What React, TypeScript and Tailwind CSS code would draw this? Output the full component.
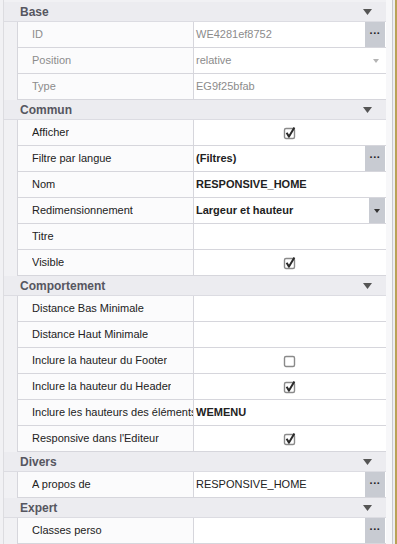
import React from 'react';

type Row = {
  label: string;
  value?: string;
  bold?: boolean;
  disabled?: boolean;
  check?: boolean;
  ellipsis?: boolean;
  combo?: boolean;
  fadedCombo?: boolean;
};

type Section = { title: string; rows: Row[] };

const sections: Section[] = [
  {
    title: 'Base',
    rows: [
      { label: 'ID', value: 'WE4281ef8752', disabled: true, ellipsis: true },
      { label: 'Position', value: 'relative', disabled: true, fadedCombo: true },
      { label: 'Type', value: 'EG9f25bfab', disabled: true },
    ],
  },
  {
    title: 'Commun',
    rows: [
      { label: 'Afficher', check: true },
      { label: 'Filtre par langue', value: '(Filtres)', bold: true, ellipsis: true },
      { label: 'Nom', value: 'RESPONSIVE_HOME', bold: true },
      { label: 'Redimensionnement', value: 'Largeur et hauteur', bold: true, combo: true },
      { label: 'Titre' },
      { label: 'Visible', check: true },
    ],
  },
  {
    title: 'Comportement',
    rows: [
      { label: 'Distance Bas Minimale' },
      { label: 'Distance Haut Minimale' },
      { label: 'Inclure la hauteur du Footer', check: false },
      { label: 'Inclure la hauteur du Header', check: true },
      { label: 'Inclure les hauteurs des éléments', value: 'WEMENU', bold: true },
      { label: "Responsive dans l'Editeur", check: true },
    ],
  },
  {
    title: 'Divers',
    rows: [{ label: 'A propos de', value: 'RESPONSIVE_HOME', ellipsis: true }],
  },
  {
    title: 'Expert',
    rows: [{ label: 'Classes perso', ellipsis: true }],
  },
];

function CheckBox({ checked }: { checked: boolean }) {
  return (
    <svg width="14" height="14" viewBox="0 0 14 14">
      <rect x="1.5" y="2.5" width="10" height="10" rx="1.5" fill="#fff" stroke="#8a8a8a" strokeWidth="1.4" />
      {checked && (
        <path d="M3.6 6.8 L6 10.6 L11.4 1.6" fill="none" stroke="#2a2a2a" strokeWidth="2" strokeLinejoin="round" />
      )}
    </svg>
  );
}

function PropRow({ row }: { row: Row }) {
  const text = row.disabled ? 'text-[#8c8c8c]' : 'text-[#222]';
  return (
    <div className="flex h-[26px] border-b border-l border-[#d6d6dc] bg-white">
      <div className={`w-[176px] shrink-0 pl-[14px] flex items-center overflow-hidden whitespace-nowrap border-r border-[#d6d6dc] bg-[#fbfbfc] ${text}`}>
        <span className="overflow-hidden">{row.label}</span>
      </div>
      <div className="relative flex-1 flex items-center pl-[2px] overflow-hidden whitespace-nowrap">
        {row.check !== undefined ? (
          <div className="w-full flex justify-center pr-[2px]">
            <CheckBox checked={row.check} />
          </div>
        ) : (
          <span className={`${text} ${row.bold ? 'font-bold' : ''}`}>{row.value}</span>
        )}
        {row.ellipsis && (
          <div className="absolute right-[1px] top-0 h-[25px] w-[20px] bg-[#c8cbd2] flex items-center justify-center text-[#222] font-bold text-[11px] leading-none pb-[3px]">
            ···
          </div>
        )}
        {row.combo && (
          <div className="absolute right-[1px] top-0 h-[25px] w-[16px] bg-[#c8cbd2] flex items-center justify-center">
            <svg width="6" height="4" viewBox="0 0 6 4"><path d="M0 0 H6 L3 4 Z" fill="#333" /></svg>
          </div>
        )}
        {row.fadedCombo && (
          <div className="absolute right-[4px] top-0 h-[25px] w-[12px] flex items-center justify-center">
            <svg width="6" height="4" viewBox="0 0 6 4"><path d="M0 0 H6 L3 4 Z" fill="#b4b4b4" /></svg>
          </div>
        )}
      </div>
    </div>
  );
}

export default function App() {
  return (
    <div
      className="w-[397px] h-[544px] overflow-hidden flex bg-[#f1f1f4] text-[11px]"
      style={{ fontFamily: '"Liberation Sans", Arial, sans-serif' }}
    >
      <div className="w-[383px] shrink-0 ml-[3px] pt-[2px] border-l border-[#dcdce0]">
        {sections.map((s) => (
          <div key={s.title}>
            <div className="h-[20px] flex items-center justify-between pl-[16px] pr-[14px] bg-[#ececf0] border-b border-[#dcdce2] text-[#565660] font-bold text-[12px]">
              <span>{s.title}</span>
              <svg width="9" height="6" viewBox="0 0 9 6"><path d="M0 0 H9 L4.5 6 Z" fill="#555" /></svg>
            </div>
            <div className="pl-[13px]">
              {s.rows.map((r) => (
                <PropRow key={r.label} row={r} />
              ))}
            </div>
          </div>
        ))}
      </div>
      <div className="flex-1 flex bg-white">
        <div className="w-[6px] bg-[#f7f7f9]" />
        <div className="w-[1px] bg-[#c9c9cf]" />
        <div className="w-[2px] bg-[#ededf0]" />
        <div className="w-[2px] bg-[#b9a256]" />
      </div>
    </div>
  );
}
